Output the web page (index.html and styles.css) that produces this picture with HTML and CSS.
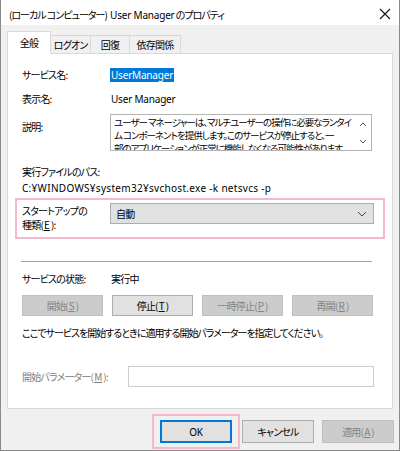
FILE: index.html
```html
<!DOCTYPE html>
<html lang="ja">
<head>
  <meta charset="UTF-8">
  <title>User Manager のプロパティ</title>
  <link rel="stylesheet" href="styles.css">
</head>
<body>
  <div class="window">
    <div class="titlebar">
      <span class="title">(ローカル コンピューター) <span class="lat">User Manager</span> のプロパティ</span>
      <svg class="close" width="12" height="12" viewBox="0 0 12 12">
        <path d="M1 1L11 11M11 1L1 11" stroke="#111" stroke-width="1.1" fill="none"/>
      </svg>
    </div>
    <div class="body">
      <ul class="tabs">
        <li class="active">全般</li>
        <li>ログオン</li>
        <li>回復</li>
        <li>依存関係</li>
      </ul>
      <div class="panel">
        <div class="row r-name">
          <span class="label">サービス名:</span>
          <span class="value lat selected">UserManager</span>
        </div>
        <div class="row r-disp">
          <span class="label">表示名:</span>
          <span class="value lat">User Manager</span>
        </div>
        <div class="row r-desc">
          <span class="label">説明:</span>
          <div class="desc">
            <div class="desc-text">ユーザー マネージャーは、マルチユーザーの操作に必要なランタイ<br>ム コンポーネントを提供します。このサービスが停止すると、一<br>部のアプリケーションが正常に機能しなくなる可能性があります</div>
            <div class="desc-scroll">
              <svg width="8" height="6" viewBox="0 0 8 6"><path d="M1 5L4 2L7 5" stroke="#555" fill="none"/></svg>
              <svg width="8" height="6" viewBox="0 0 8 6"><path d="M1 1L4 4L7 1" stroke="#555" fill="none"/></svg>
            </div>
          </div>
        </div>
        <div class="line r-path-label">実行ファイルのパス:</div>
        <div class="line lat r-path">C:¥WINDOWS¥system32¥svchost.exe -k netsvcs -p</div>
        <div class="mark r-startup">
          <div class="label two">
            <div>スタートアップの</div>
            <div>種類(<u>E</u>):</div>
          </div>
          <div class="select">
            <span>自動</span>
            <svg width="10" height="6" viewBox="0 0 10 6"><path d="M1 1L5 5L9 1" stroke="#444" fill="none"/></svg>
          </div>
        </div>
        <div class="sep"></div>
        <div class="row r-state">
          <span class="label">サービスの状態:</span>
          <span class="value">実行中</span>
        </div>
        <div class="btn-row">
          <button class="btn" disabled>開始(<u>S</u>)</button>
          <button class="btn">停止(<u>T</u>)</button>
          <button class="btn" disabled>一時停止(<u>P</u>)</button>
          <button class="btn" disabled>再開(<u>R</u>)</button>
        </div>
        <div class="line r-hint">ここでサービスを開始するときに適用する開始パラメーターを指定してください。</div>
        <div class="row r-param">
          <span class="label dim">開始パラメーター(<u>M</u>):</span>
          <div class="input"></div>
        </div>
      </div>
      <div class="footer">
        <span class="mark-ok"><button class="btn default"><span class="lat">OK</span></button></span>
        <button class="btn">キャンセル</button>
        <button class="btn" disabled>適用(<u>A</u>)</button>
      </div>
    </div>
  </div>
</body>
</html>
```

FILE: styles.css
```css
*{
  margin:0;
  padding:0;
  box-sizing: border-box;
}
li{
  list-style: none;
}
body{
  background-color: #fff;
  font-family: "Noto Sans CJK JP", "Noto Sans", sans-serif;
  font-size: 10px;
  letter-spacing: -0.8px;
  font-feature-settings: "palt";
  color: #000;
  white-space: nowrap;
}
u{
  letter-spacing: 0;
  margin: 0 1px;
}
.lat{
  font-family: "Noto Sans", "Noto Sans CJK JP", sans-serif;
  font-size: 10px;
  letter-spacing: -0.2px;
}
.window{
  width: 400px;
  height: 451px;
  border: 1px solid #8a8a8a;
  border-top: none;
  display: flex;
  flex-direction: column;
  background: #f0f0f0;
}
.titlebar{
  height: 25px;
  background: #fff;
  display: flex;
  align-items: center;
  justify-content: space-between;
  padding: 0 7px 0 8px;
}
.title{
  line-height: 14px;
  margin-top: 4px;
  letter-spacing: -1px;
}
.title .lat{
  margin-left: 2px;
}
.close{
  margin-right: 1px;
  margin-top: 2px;
}
.body{
  flex: 1;
  padding: 0 6px 0 6px;
  display: flex;
  flex-direction: column;
}

/* tabs */
.tabs{
  display: flex;
  align-items: flex-end;
  height: 28px;
  padding-top: 7px;
  position: relative;
  z-index: 1;
}
.tabs li{
  height: 18px;
  line-height: 17px;
  border: 1px solid #d9d9d9;
  border-bottom: none;
  background: #f0f0f0;
  text-align: center;
  margin-left: -1px;
}
.tabs li:nth-child(1){ width: 44px; }
.tabs li:nth-child(2){ width: 41px; }
.tabs li:nth-child(3){ width: 40px; }
.tabs li:nth-child(4){ width: 52px; }
.tabs li.active{
  height: 23px;
  line-height: 21px;
  background: #fff;
  margin-left: 0;
  margin-bottom: -1px;
}

.panel{
  background: #fff;
  border: 1px solid #d9d9d9;
  height: 356px;
  padding: 0 14px 0 14px;
}
.row{
  display: flex;
  align-items: center;
}
.label{
  width: 89px;
  flex: none;
  line-height: 14px;
}
.value{
  line-height: 14px;
}
.selected{
  background: #0078d7;
  color: #fff;
  padding: 0 1px;
  margin-left: -1px;
}
.r-name{ margin-top: 14px; }
.r-disp{ margin-top: 10px; }
.r-desc{
  margin-top: 8px;
  align-items: flex-start;
}
.r-desc .label{ margin-top: 6px; }
.desc{
  width: 262px;
  height: 37px;
  border: 1px solid #b4b4b4;
  display: flex;
  overflow: hidden;
  margin-left: -1px;
}
.desc-text{
  flex: 1;
  padding: 1px 0 0 3px;
  font-size: 9.5px;
  line-height: 13px;
  letter-spacing: -1px;
  overflow: hidden;
}
.desc-scroll{
  width: 17px;
  flex: none;
  display: flex;
  flex-direction: column;
  justify-content: space-between;
  align-items: center;
  padding: 6px 0 5px;
}
.line{
  line-height: 14px;
}
.r-path-label{ margin-top: 14px; }
.r-path{
  margin-top: 2px;
  letter-spacing: 0.3px;
}

/* marker box around the startup row */
.mark{
  border: 2px solid #f4b9cf;
  margin: 3px -7px 0 -7px;
  height: 41px;
  display: flex;
  align-items: flex-start;
  padding: 3px 0 0 5px;
}
.label.two{
  display: flex;
  flex-direction: column;
  line-height: 14px;
  margin-top: 1px;
}
.select{
  width: 264px;
  height: 21px;
  background: #e1e1e1;
  border: 1px solid #adadad;
  display: flex;
  align-items: center;
  justify-content: space-between;
  padding: 0 6px 0 5px;
  margin-left: -1px;
}
.sep{
  height: 1px;
  background: #a0a0a0;
  margin: 22px 6px 0 -1px;
}
.r-state{ margin-top: 10px; }

.btn-row{
  display: flex;
  gap: 9px;
  margin-top: 9px;
}
.btn{
  font-family: inherit;
  font-size: 10px;
  letter-spacing: -0.8px;
  font-feature-settings: "palt";
  width: 81px;
  height: 21px;
  background: #e1e1e1;
  border: 1px solid #adadad;
  color: #000;
}
.btn:disabled{
  background: #cccccc;
  border-color: #bfbfbf;
  color: #838383;
}
.r-hint{
  margin-top: 10px;
  letter-spacing: -1px;
}
.r-param{ margin-top: 26px; }
.label.dim{
  color: #808080;
  width: 106px;
}
.input{
  width: 246px;
  height: 21px;
  border: 1px solid #cccccc;
}

/* dialog buttons */
.footer{
  display: flex;
  justify-content: flex-end;
  align-items: center;
  gap: 8px;
  padding-top: 5px;
  margin-right: -1px;
}
.footer .btn{
  width: 72px;
  height: 23px;
}
.mark-ok{
  border: 2px solid #f4b9cf;
  padding: 4px 6px;
  margin-right: -6px;
  display: flex;
}
.btn.default{
  border: 2px solid #0078d7;
}
```
